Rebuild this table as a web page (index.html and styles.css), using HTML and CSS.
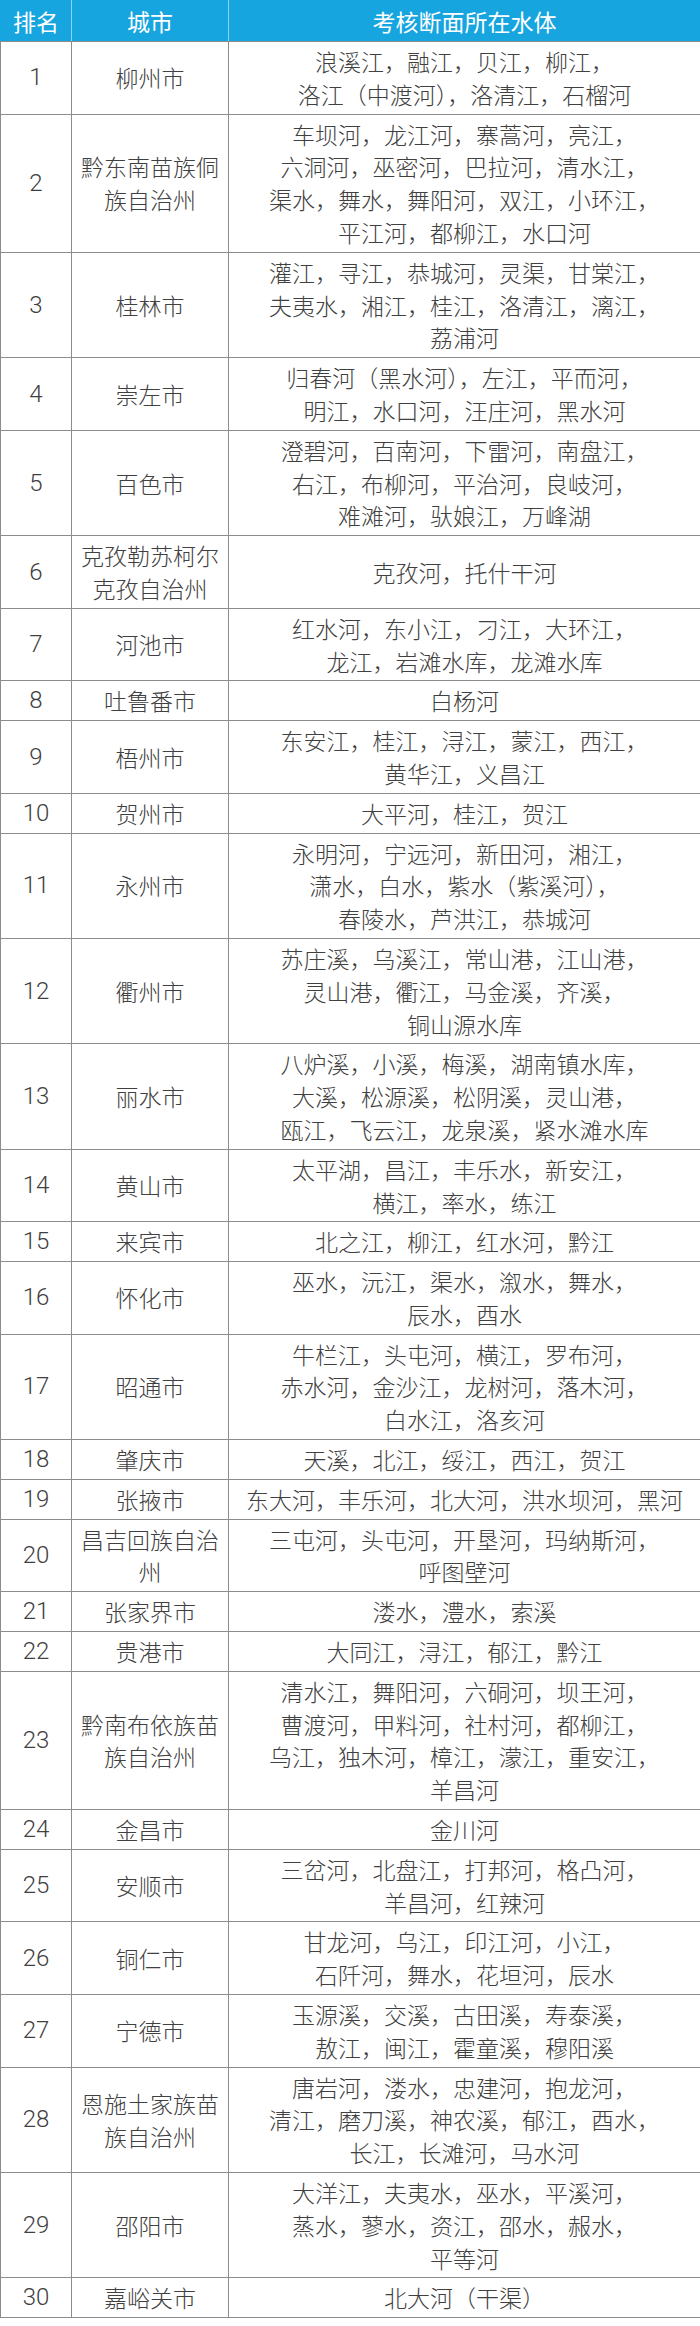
FILE: index.html
```html
<!DOCTYPE html>
<html lang="zh-CN">
<head>
<meta charset="utf-8">
<title>考核断面所在水体排名</title>
<link rel="stylesheet" href="styles.css">
</head>
<body>
<table class="rank">
<colgroup><col class="c-rank"><col class="c-city"><col class="c-water"></colgroup>
<thead>
<tr><th>排名</th><th>城市</th><th>考核断面所在水体</th></tr>
</thead>
<tbody>
<tr><td>1</td><td>柳州市</td><td>浪溪江，融江，贝江，柳江，<br>洛江（中渡河），洛清江，石榴河</td></tr>
<tr><td>2</td><td>黔东南苗族侗<br>族自治州</td><td>车坝河，龙江河，寨蒿河，亮江，<br>六洞河，巫密河，巴拉河，清水江，<br>渠水，舞水，舞阳河，双江，小环江，<br>平江河，都柳江，水口河</td></tr>
<tr><td>3</td><td>桂林市</td><td>灌江，寻江，恭城河，灵渠，甘棠江，<br>夫夷水，湘江，桂江，洛清江，漓江，<br>荔浦河</td></tr>
<tr><td>4</td><td>崇左市</td><td>归春河（黑水河），左江，平而河，<br>明江，水口河，汪庄河，黑水河</td></tr>
<tr><td>5</td><td>百色市</td><td>澄碧河，百南河，下雷河，南盘江，<br>右江，布柳河，平治河，良岐河，<br>难滩河，驮娘江，万峰湖</td></tr>
<tr><td>6</td><td>克孜勒苏柯尔<br>克孜自治州</td><td>克孜河，托什干河</td></tr>
<tr><td>7</td><td>河池市</td><td>红水河，东小江，刁江，大环江，<br>龙江，岩滩水库，龙滩水库</td></tr>
<tr><td>8</td><td>吐鲁番市</td><td>白杨河</td></tr>
<tr><td>9</td><td>梧州市</td><td>东安江，桂江，浔江，蒙江，西江，<br>黄华江，义昌江</td></tr>
<tr><td>10</td><td>贺州市</td><td>大平河，桂江，贺江</td></tr>
<tr><td>11</td><td>永州市</td><td>永明河，宁远河，新田河，湘江，<br>潇水，白水，紫水（紫溪河），<br>春陵水，芦洪江，恭城河</td></tr>
<tr><td>12</td><td>衢州市</td><td>苏庄溪，乌溪江，常山港，江山港，<br>灵山港，衢江，马金溪，齐溪，<br>铜山源水库</td></tr>
<tr><td>13</td><td>丽水市</td><td>八炉溪，小溪，梅溪，湖南镇水库，<br>大溪，松源溪，松阴溪，灵山港，<br>瓯江，飞云江，龙泉溪，紧水滩水库</td></tr>
<tr><td>14</td><td>黄山市</td><td>太平湖，昌江，丰乐水，新安江，<br>横江，率水，练江</td></tr>
<tr><td>15</td><td>来宾市</td><td>北之江，柳江，红水河，黔江</td></tr>
<tr><td>16</td><td>怀化市</td><td>巫水，沅江，渠水，溆水，舞水，<br>辰水，酉水</td></tr>
<tr><td>17</td><td>昭通市</td><td>牛栏江，头屯河，横江，罗布河，<br>赤水河，金沙江，龙树河，落木河，<br>白水江，洛亥河</td></tr>
<tr><td>18</td><td>肇庆市</td><td>天溪，北江，绥江，西江，贺江</td></tr>
<tr><td>19</td><td>张掖市</td><td>东大河，丰乐河，北大河，洪水坝河，黑河</td></tr>
<tr><td>20</td><td>昌吉回族自治<br>州</td><td>三屯河，头屯河，开垦河，玛纳斯河，<br>呼图壁河</td></tr>
<tr><td>21</td><td>张家界市</td><td>溇水，澧水，索溪</td></tr>
<tr><td>22</td><td>贵港市</td><td>大同江，浔江，郁江，黔江</td></tr>
<tr><td>23</td><td>黔南布依族苗<br>族自治州</td><td>清水江，舞阳河，六硐河，坝王河，<br>曹渡河，甲料河，社村河，都柳江，<br>乌江，独木河，樟江，濛江，重安江，<br>羊昌河</td></tr>
<tr><td>24</td><td>金昌市</td><td>金川河</td></tr>
<tr><td>25</td><td>安顺市</td><td>三岔河，北盘江，打邦河，格凸河，<br>羊昌河，红辣河</td></tr>
<tr><td>26</td><td>铜仁市</td><td>甘龙河，乌江，印江河，小江，<br>石阡河，舞水，花垣河，辰水</td></tr>
<tr><td>27</td><td>宁德市</td><td>玉源溪，交溪，古田溪，寿泰溪，<br>敖江，闽江，霍童溪，穆阳溪</td></tr>
<tr><td>28</td><td>恩施土家族苗<br>族自治州</td><td>唐岩河，溇水，忠建河，抱龙河，<br>清江，磨刀溪，神农溪，郁江，酉水，<br>长江，长滩河，马水河</td></tr>
<tr><td>29</td><td>邵阳市</td><td>大洋江，夫夷水，巫水，平溪河，<br>蒸水，蓼水，资江，邵水，赧水，<br>平等河</td></tr>
<tr><td>30</td><td>嘉峪关市</td><td>北大河（干渠）</td></tr>
</tbody>
</table>
</body>
</html>
```
FILE: styles.css
```css
html, body {
  margin: 0;
  padding: 0;
  background: #ffffff;
}

body {
  font-family: "Noto Sans CJK SC", "Noto Sans", sans-serif;
  color: #404040;
}

.rank {
  width: 700px;
  border-collapse: collapse;
  table-layout: fixed;
}

.c-rank { width: 71px; }
.c-city { width: 157px; }
.c-water { width: 472px; }

.rank th {
  background: #17a5e0;
  color: #ffffff;
  font-size: 23px;
  font-weight: 400;
  line-height: 33px;
  padding: 4px 0 3px;
  text-align: center;
  border-left: 1px solid #8fd3f0;
  border-right: 1px solid #8fd3f0;
  border-top: 1px solid #17a5e0;
  border-bottom: 1px solid #8c8c8c;
}

.rank th:first-child { border-left-color: #17a5e0; }
.rank th:last-child { border-right-color: #17a5e0; }

.rank td {
  font-size: 23px;
  font-weight: 300;
  line-height: 32.8px;
  padding: 3px 0;
  text-align: center;
  vertical-align: middle;
  white-space: nowrap;
  border: 1px solid #8c8c8c;
}

.rank td:first-child {
  font-family: Roboto, "Noto Sans CJK SC", sans-serif;
  font-size: 24px;
  font-weight: 300;
}
```
